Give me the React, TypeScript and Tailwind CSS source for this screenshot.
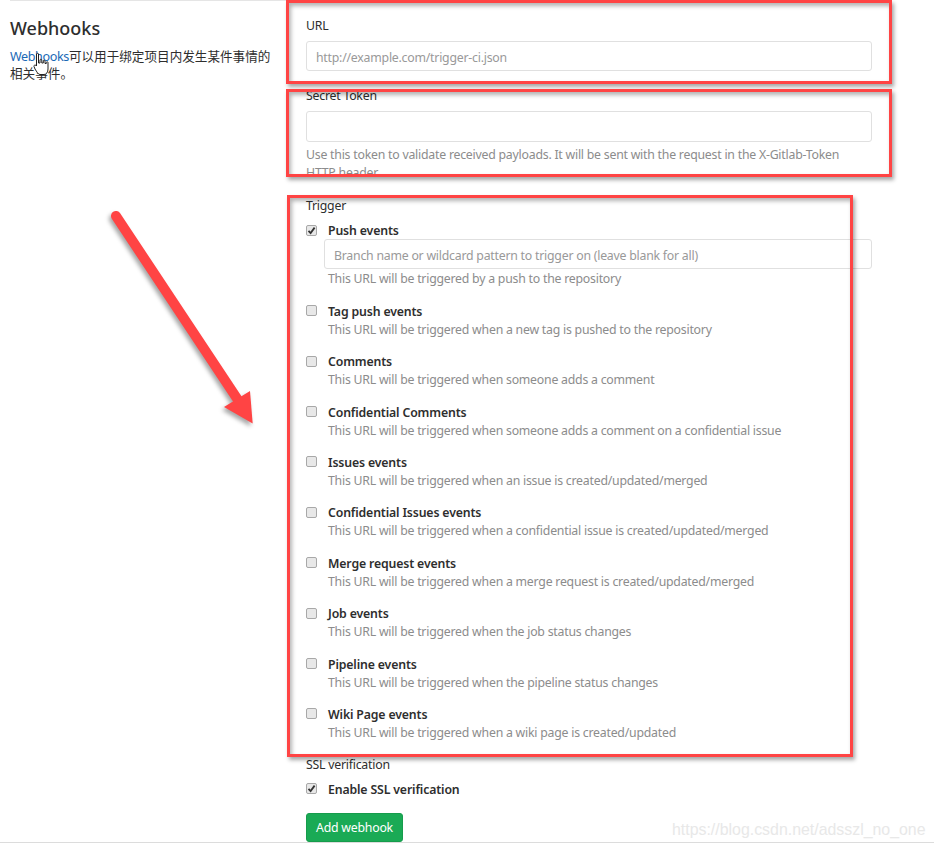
import React from "react";

const events = [
  { title: "Tag push events", help: "This URL will be triggered when a new tag is pushed to the repository" },
  { title: "Comments", help: "This URL will be triggered when someone adds a comment" },
  { title: "Confidential Comments", help: "This URL will be triggered when someone adds a comment on a confidential issue" },
  { title: "Issues events", help: "This URL will be triggered when an issue is created/updated/merged" },
  { title: "Confidential Issues events", help: "This URL will be triggered when a confidential issue is created/updated/merged" },
  { title: "Merge request events", help: "This URL will be triggered when a merge request is created/updated/merged" },
  { title: "Job events", help: "This URL will be triggered when the job status changes" },
  { title: "Pipeline events", help: "This URL will be triggered when the pipeline status changes" },
  { title: "Wiki Page events", help: "This URL will be triggered when a wiki page is created/updated" },
];

const Checkbox = ({ checked }: { checked?: boolean }) => (
  <span className="flex h-[11px] w-[11px] shrink-0 items-center justify-center rounded-[2px] border border-[#a8a8a8] bg-[#e8e8e8]">
    {checked && (
      <svg width="9" height="9" viewBox="0 0 9 9">
        <path d="M1.5 4.8 L3.6 7 L7.6 1.6" fill="none" stroke="#333" strokeWidth="1.8" />
      </svg>
    )}
  </span>
);

const CheckRow = ({ label, checked }: { label: string; checked?: boolean }) => (
  <div className="flex h-[18px] items-center">
    <Checkbox checked={checked} />
    <span className="ml-[11px] pt-[2px] font-semibold tracking-[-0.15px] text-[#2e2e2e]">{label}</span>
  </div>
);

const Frame = ({ className }: { className: string }) => (
  <div
    className={`pointer-events-none absolute border-[3px] border-[#ff4444] shadow-[2px_3px_4px_rgba(0,0,0,0.35),inset_2px_3px_4px_rgba(0,0,0,0.3)] ${className}`}
  />
);

export default function App() {
  return (
    <div className="relative flex h-[848px] w-[934px] overflow-hidden bg-white font-['Noto_Sans','Noto_Sans_CJK_SC',sans-serif] text-[12.3px] leading-[18px] tracking-[-0.23px] text-[#2e2e2e]">
      {/* Left column */}
      <div className="w-[306px] shrink-0 pl-[10px]">
        <div className="h-px w-[277px] bg-[#e5e5e5]" />
        <h4 className="mt-[17px] text-[18px] leading-[20px] font-medium tracking-normal">Webhooks</h4>
        <p className="mt-[10px] w-[264px] text-[12.6px] leading-[17px] tracking-normal">
          <a className="tracking-[-0.4px] text-[#1b69b6]">Webhooks</a>可以用于绑定项目内发生某件事情的相关事件。
        </p>
      </div>

      {/* Form */}
      <div className="w-[566px] shrink-0 pt-[17px]">
        <label className="block h-[18px]">URL</label>
        <input
          className="mt-[6px] block h-[30px] w-full rounded-[3px] border border-[#e0e0e0] px-[9px] pt-[2px] outline-none placeholder:text-[#999]"
          placeholder="http://example.com/trigger-ci.json"
        />
        <label className="mt-[16px] block h-[18px]">Secret Token</label>
        <input className="mt-[6px] block h-[31px] w-full rounded-[3px] border border-[#e0e0e0] outline-none" />
        <p className="mt-[4px] w-[545px] text-[#8c8c8c]">
          Use this token to validate received payloads. It will be sent with the request in the X-Gitlab-Token HTTP header
        </p>

        <div className="mt-[15px] h-[18px]">Trigger</div>
        <div className="mt-[6px]">
          <CheckRow label="Push events" checked />
          <input
            className="ml-[18px] block h-[30px] w-[548px] rounded-[3px] border border-[#e0e0e0] px-[9px] pt-[2px] outline-none placeholder:text-[#999]"
            placeholder="Branch name or wildcard pattern to trigger on (leave blank for all)"
          />
          <p className="mt-px ml-[22px] text-[#8c8c8c]">This URL will be triggered by a push to the repository</p>
        </div>
        <div className="mt-[13.8px]">
          {events.map((e) => (
            <div key={e.title} className="mb-[13.4px] last:mb-0">
              <CheckRow label={e.title} />
              <p className="ml-[22px] pt-px text-[#8c8c8c]">{e.help}</p>
            </div>
          ))}
        </div>

        <div className="mt-[14px] h-[18px]">SSL verification</div>
        <div className="mt-[6px]">
          <CheckRow label="Enable SSL verification" checked />
        </div>
        <button className="mt-[15px] block h-[29px] w-[97px] rounded-[3px] border border-[#169c4c] bg-[#1aaa55] pt-[2px] text-white">
          Add webhook
        </button>
      </div>

      {/* Annotations on top of the screenshot */}
      <Frame className="top-0 left-[286px] h-[84px] w-[606px]" />
      <Frame className="top-[89px] left-[286px] h-[88px] w-[606px]" />
      <Frame className="top-[195px] left-[287px] h-[562px] w-[566px]" />

      <svg className="pointer-events-none absolute top-0 left-0" width="300" height="450" viewBox="0 0 300 450">
        <g className="drop-shadow-[-2px_3px_2px_rgba(0,0,0,0.35)]">
          <line x1="116" y1="216" x2="238" y2="400" stroke="#ff4444" strokeWidth="10" strokeLinecap="round" />
          <polygon points="224,407 250,391 252.7,423.5" fill="#ff4444" />
        </g>
      </svg>

      {/* Mouse pointer */}
      <svg className="pointer-events-none absolute top-[52px] left-[33px]" width="17" height="24" viewBox="0 0 17 24">
        <path
          d="M3.5 2 C3.5 1 5.5 1 5.5 2 L5.5 11 L7 11 L7 8 C7 7 8.8 7 8.8 8 L8.8 11 L10.3 11 L10.3 9 C10.3 8 12 8 12 9 L12 11.5 L13.3 11.5 L13.3 10.5 C13.3 9.5 15 9.5 15 10.5 L15 17 C15 20 13.5 22.5 11 22.5 L7 22.5 C5 22.5 4 20 2 17 L1 14.5 C0.6 13 2.5 12.5 3.5 14 Z"
          fill="#fff"
          stroke="#222"
          strokeWidth="1"
        />
      </svg>

      {/* Watermark */}
      <span className="absolute top-[820px] left-[672px] font-['Liberation_Sans',sans-serif] text-[15.9px] leading-[20px] tracking-normal text-[#e8e8e8]">
        https://blog.csdn.net/adsszl_no_one
      </span>
      <div className="absolute top-[842px] left-0 h-px w-full bg-[#dcdcdc]" />
    </div>
  );
}
